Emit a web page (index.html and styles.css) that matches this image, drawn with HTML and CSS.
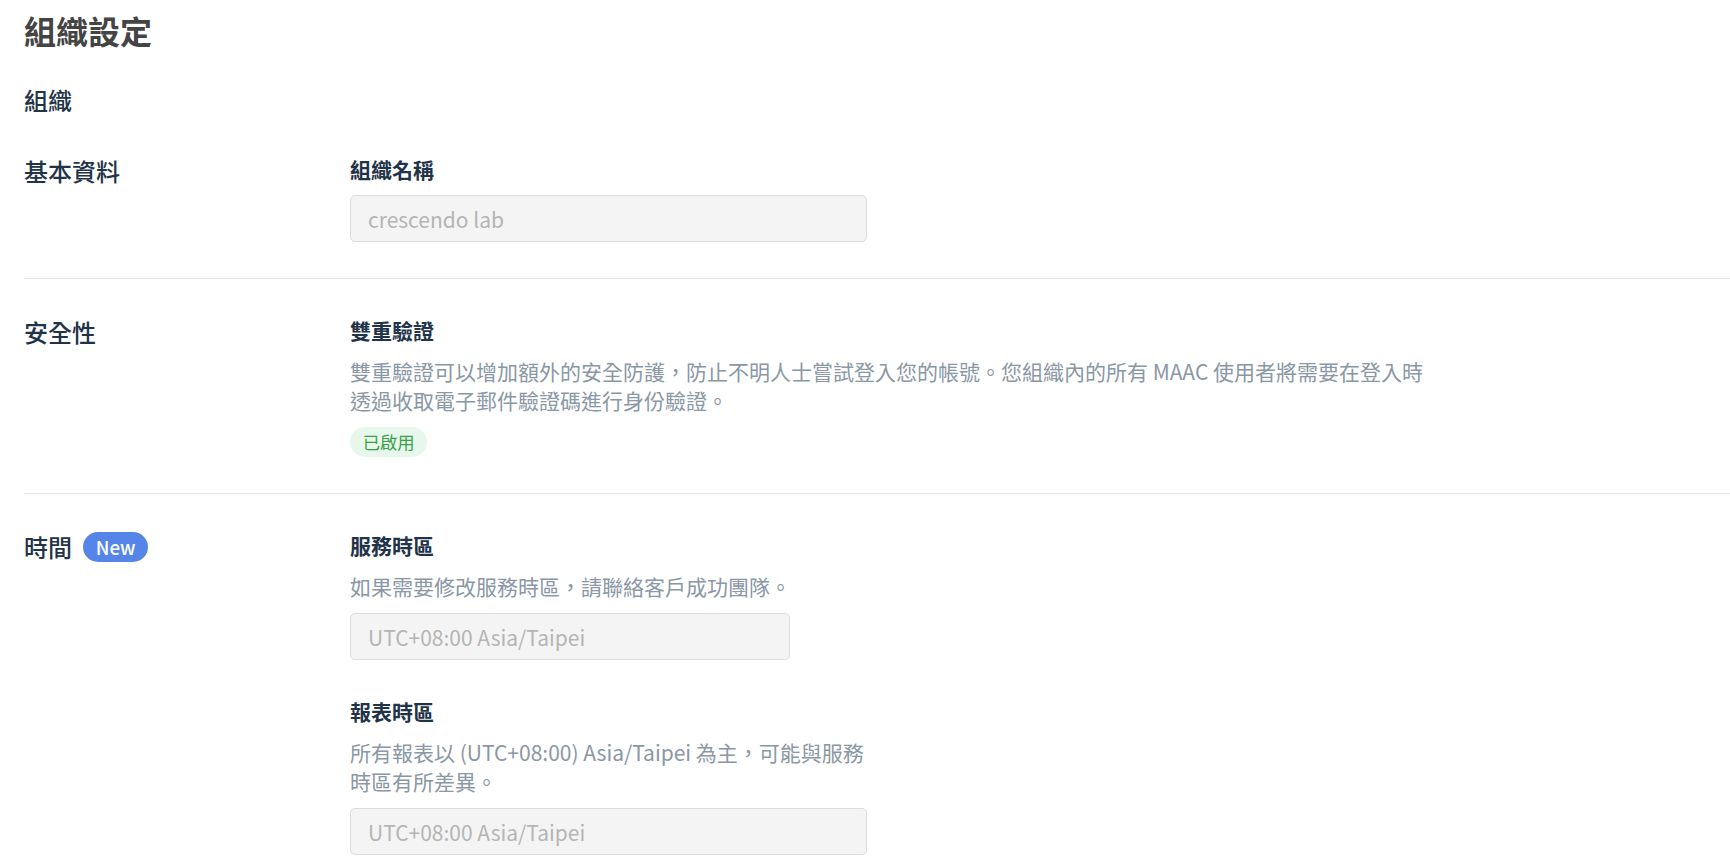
FILE: index.html
```html
<!DOCTYPE html>
<html lang="zh-Hant">
<head>
<meta charset="utf-8">
<title>組織設定</title>
<link rel="stylesheet" href="styles.css">
</head>
<body>
<div class="page">
  <h1 class="title">組織設定</h1>
  <h2 class="subtitle">組織</h2>

  <section class="row">
    <div class="row-label">基本資料</div>
    <div class="row-body">
      <div class="field">
        <div class="field-label">組織名稱</div>
        <div class="input w-517">crescendo lab</div>
      </div>
    </div>
  </section>

  <section class="row">
    <div class="row-label">安全性</div>
    <div class="row-body">
      <div class="field">
        <div class="field-label">雙重驗證</div>
        <div class="field-desc w-1080">雙重驗證可以增加額外的安全防護，防止不明人士嘗試登入您的帳號。您組織內的所有 MAAC 使用者將需要在登入時透過收取電子郵件驗證碼進行身份驗證。</div>
        <div class="tag-wrap"><span class="tag tag-green">已啟用</span></div>
      </div>
    </div>
  </section>

  <section class="row row-last">
    <div class="row-label">時間 <span class="tag tag-blue">New</span></div>
    <div class="row-body">
      <div class="field">
        <div class="field-label">服務時區</div>
        <div class="field-desc">如果需要修改服務時區，請聯絡客戶成功團隊。</div>
        <div class="input w-440">UTC+08:00 Asia/Taipei</div>
      </div>
      <div class="field">
        <div class="field-label">報表時區</div>
        <div class="field-desc w-517">所有報表以 (UTC+08:00) Asia/Taipei 為主，可能與服務時區有所差異。</div>
        <div class="input w-517">UTC+08:00 Asia/Taipei</div>
      </div>
    </div>
  </section>
</div>
</body>
</html>
```

FILE: styles.css
```css
* { box-sizing: border-box; }
html, body { margin: 0; padding: 0; background: #fff; }
body {
  font-family: "Noto Sans CJK TC", "Noto Sans", sans-serif;
  color: #1f3349;
}
.page {
  padding: 8px 0 0 24px;
}
.title {
  margin: 0;
  font-size: 32px;
  line-height: 44px;
  font-weight: 700;
  color: #444;
}
.subtitle {
  margin: 31px 0 1px;
  font-size: 24px;
  line-height: 34px;
  font-weight: 500;
  color: #1f3349;
}
.row {
  display: grid;
  grid-template-columns: 326px 1fr;
  padding: 36px 0;
  border-bottom: 1px solid #e6e6e6;
}
.row-last { border-bottom: none; }
.row-label {
  display: flex;
  align-items: center;
  align-self: start;
  gap: 11px;
  font-size: 24px;
  line-height: 34px;
  font-weight: 500;
  color: #1f3349;
}
.row-body {
  display: flex;
  flex-direction: column;
  gap: 36px;
}
.field {
  display: flex;
  flex-direction: column;
  gap: 12px;
}
.field-label {
  font-size: 21px;
  line-height: 30px;
  font-weight: 700;
  color: #1f3349;
}
.field-desc {
  font-size: 21px;
  line-height: 29px;
  color: #8a97a5;
}
.w-1080 { max-width: 1080px; }
.w-517 { width: 517px; }
.w-440 { width: 440px; }
.input {
  height: 47px;
  display: flex;
  align-items: center;
  padding: 0 17px;
  background: #f4f4f4;
  border: 1px solid #dcdcdc;
  border-radius: 5px;
  font-size: 21px;
  color: #b5b5b5;
}
.field-label + .input { margin-top: -1px; }
.tag-wrap { margin-top: 0; }
.tag {
  display: inline-flex;
  align-items: center;
  height: 30px;
  padding: 0 12.7px;
  border-radius: 15px;
  font-size: 17.33px;
  line-height: 1;
}
.tag-green {
  background: #e8f7eb;
  color: #3b9f4b;
}
.tag-blue {
  background: #5585e8;
  color: #fff;
  font-size: 18.67px;
  font-weight: 500;
}
```
